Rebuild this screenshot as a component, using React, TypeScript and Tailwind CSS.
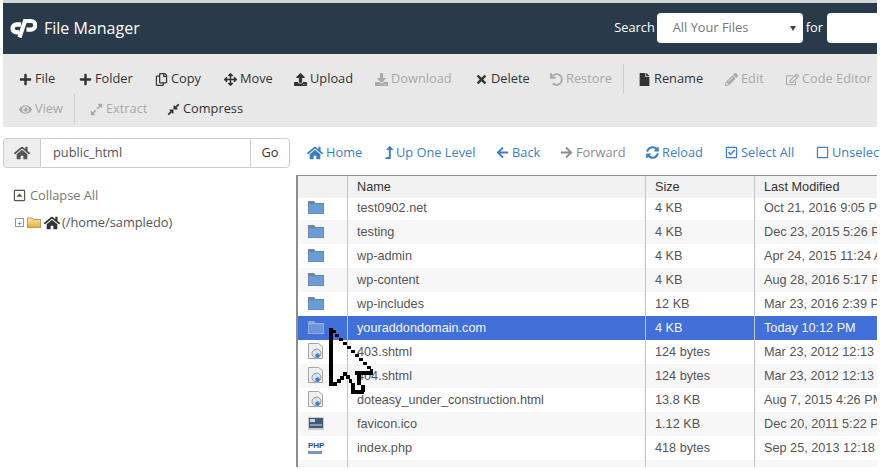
import React from "react";
import { FaPlus, FaRegCopy, FaArrowsAlt, FaUpload, FaDownload, FaTimes, FaUndo, FaFile, FaPencilAlt, FaRegEdit, FaEye, FaExpandAlt, FaCompressAlt, FaHome, FaLevelUpAlt, FaArrowLeft, FaArrowRight, FaSyncAlt, FaRegCheckSquare, FaRegSquare, FaRegCaretSquareUp } from "react-icons/fa";

const dark = "text-[#333]";
const dim = "text-[#a9a9a9]";

function Tool({ icon: I, label, off, size = 13, className = "" }: { icon: any; label: string; off?: boolean; size?: number; className?: string }) {
  return (
    <div className={`flex items-center gap-[3px] ${off ? dim : dark} ${className}`}>
      <I size={size} />
      <span>{label}</span>
    </div>
  );
}

function Nav({ icon: I, label, off, size = 13, iconClass = "", className = "" }: { icon: any; label: string; off?: boolean; size?: number; iconClass?: string; className?: string }) {
  return (
    <div className={`flex shrink-0 items-center gap-[3px] ${off ? "text-[#8c8c8c]" : "text-[#3b7fc4]"} ${className}`}>
      <I size={size} className={iconClass} />
      <span>{label}</span>
    </div>
  );
}

function BlueFolder({ pale }: { pale?: boolean }) {
  return (
    <svg width="16" height="14" viewBox="0 0 16 14">
      <path d="M0 1h6l1.500 2H16v11H0z" fill={pale ? "#8aa6dc" : "#7d8085"} />
      <path d="M.3 3.800h15.400v9.900H.3z" fill={pale ? "#6c93dc" : "#6d9bd6"} stroke={pale ? "#b3c6ec" : "#5b88c4"} strokeWidth="0.6" />
    </svg>
  );
}

function WebFile() {
  return (
    <svg width="15" height="16" viewBox="0 0 15 16">
      <path d="M.5.500h10l4 3v12H.5z" fill="#f0f0f0" stroke="#a5a5a5" />
      <circle cx="8.500" cy="10.500" r="4.500" fill="#dde3ea" stroke="#8b98a8" />
      <circle cx="9.500" cy="12.500" r="2.200" fill="#3f7fca" />
    </svg>
  );
}

function IcoFile() {
  return (
    <svg width="16" height="13" viewBox="0 0 16 13">
      <rect width="16" height="13" fill="#c9ccd0" />
      <rect x="1" y="1" width="14" height="10" fill="#43597a" />
      <rect x="2" y="2" width="5" height="3" fill="#bcd4ee" />
      <rect x="2" y="7" width="12" height="2" fill="#8a9bb0" />
    </svg>
  );
}

function TxtFile() {
  return (
    <svg width="15" height="12" viewBox="0 0 15 12">
      <path d="M2 2.500h12l-2 5H.5z" fill="#fbeeea" stroke="#c98a80" />
    </svg>
  );
}

function PhpFile() {
  return (
    <div className="w-[14px] border-b-[3px] border-[#7c93c9] text-center font-['Liberation_Sans',sans-serif] text-[8px] leading-[10px] font-bold text-[#2d4a9b]">PHP</div>
  );
}

const rows: { icon: string; name: string; size: string; date: string; sel?: boolean }[] = [
  { icon: "folder", name: "test0902.net", size: "4 KB", date: "Oct 21, 2016 9:05 PM" },
  { icon: "folder", name: "testing", size: "4 KB", date: "Dec 23, 2015 5:26 PM" },
  { icon: "folder", name: "wp-admin", size: "4 KB", date: "Apr 24, 2015 11:24 AM" },
  { icon: "folder", name: "wp-content", size: "4 KB", date: "Aug 28, 2016 5:17 PM" },
  { icon: "folder", name: "wp-includes", size: "12 KB", date: "Mar 23, 2016 2:39 PM" },
  { icon: "folder", name: "youraddondomain.com", size: "4 KB", date: "Today 10:12 PM", sel: true },
  { icon: "web", name: "403.shtml", size: "124 bytes", date: "Mar 23, 2012 12:13 PM" },
  { icon: "web", name: "404.shtml", size: "124 bytes", date: "Mar 23, 2012 12:13 PM" },
  { icon: "web", name: "doteasy_under_construction.html", size: "13.8 KB", date: "Aug 7, 2015 4:26 PM" },
  { icon: "ico", name: "favicon.ico", size: "1.12 KB", date: "Dec 20, 2011 5:22 PM" },
  { icon: "php", name: "index.php", size: "418 bytes", date: "Sep 25, 2013 12:18 PM" },
  { icon: "txt", name: "license.txt", size: "19.46 KB", date: "Mar 23, 2016 2:39 PM" },
];

function Row({ r, i }: { r: (typeof rows)[number]; i: number }) {
  const bg = r.sel ? "bg-[#4170d8] text-[#f4f7fd]" : i % 2 === 0 ? "bg-white text-[#555]" : "bg-[#f7f7f7] text-[#555]";
  return (
    <div className={`flex h-[24px] shrink-0 items-center ${bg} ${i === 0 ? "-mt-[2px]" : ""}`}>
      <div className="flex w-[49px] shrink-0 items-center pb-[2px] pl-[10px]">
        {r.icon === "folder" && <BlueFolder pale={r.sel} />}
        {r.icon === "web" && <WebFile />}
        {r.icon === "ico" && <IcoFile />}
        {r.icon === "php" && <PhpFile />}
        {r.icon === "txt" && <TxtFile />}
      </div>
      <div className={`h-full w-[298px] shrink-0 border-l border-[#c4c4c4] pl-[9px] leading-[24px] ${r.sel ? "font-medium" : ""}`}>{r.name}</div>
      <div className="h-full w-[109px] shrink-0 border-l border-[#c4c4c4] pl-[9px] leading-[24px]">{r.size}</div>
      <div className="h-full flex-1 overflow-hidden border-l border-[#c4c4c4] pl-[9px] leading-[24px] whitespace-nowrap">{r.date}</div>
    </div>
  );
}

function Cursor() {
  return (
    <svg className="absolute top-[327px] left-[329px]" width="46" height="68" viewBox="0 0 46 68" shapeRendering="crispEdges">
      <path d="M0 1h4v58H0zM0 55h8v4H0zM8 52h4v4H8zM11 49h4v4h-4zM14 45h4v4h-4zM17 48h4v4h-4zM20 52h3v4h-3zM22 56h4v8h-4zM22 63h13v4H22zM32 58h4v7h-4zM28 48h4v10h-4zM26 44h18v4H26z" fill="#000" />
      <path d="M3 3h4v3H3zM6 7h4v3H6zM10 11h4v3h-4zM14 15h4v3h-4zM18 19h4v3h-4zM22 23h4v3h-4zM26 27h4v3h-4zM30 31h4v3h-4zM34 35h4v3h-4zM38 39h4v3h-4zM41 42h3v3h-3z" fill="#000" />
    </svg>
  );
}

export default function App() {
  return (
    <div className="relative h-[471px] w-[880px] overflow-hidden bg-white font-['Open_Sans',sans-serif] text-[12.8px]">
      <div className="mr-[3px] ml-[3px] flex h-[466px] flex-col border-t-[3px] border-[#d4d6d8]">
        <header className="flex h-[51px] shrink-0 items-center bg-[#293a4a] pb-[1px] pl-[6px] text-white">
          <svg width="28" height="20" viewBox="0 0 28 20" className="mr-[7px]">
            <path d="M12 6.500H7.500a3.900 3.900 0 0 0 0 7.800H10" fill="none" stroke="#fff" strokeWidth="4.400" />
            <path d="M10.500 19.500L16 3h6a4.300 4.300 0 0 1 0 8.600h-4.500" fill="none" stroke="#fff" strokeWidth="4.200" />
          </svg>
          <span className="text-[16px] font-medium">File Manager</span>
          <div className="ml-auto flex items-center">
            <span className="mr-[2px]">Search</span>
            <div className="relative flex h-[30px] w-[146px] items-center rounded-[4px] bg-white pl-[16px] text-[#777]">
              All Your Files
              <span className="absolute top-[13px] right-[7px] h-0 w-0 border-x-[3px] border-t-[5px] border-x-transparent border-t-[#444]" />
            </div>
            <span className="mr-[4px] ml-[3px]">for</span>
            <div className="h-[30px] w-[50px] rounded-l-[4px] bg-white" />
          </div>
        </header>
        <div className="h-[73px] shrink-0 bg-[#e8e8e8] pt-[10px] pl-[16px]">
          <div className="flex h-[30px] items-center whitespace-nowrap">
            <Tool icon={FaPlus} label="File" className="w-[60px]" />
            <Tool icon={FaPlus} label="Folder" className="w-[76px]" />
            <Tool icon={FaRegCopy} label="Copy" className="w-[69px]" />
            <Tool icon={FaArrowsAlt} label="Move" className="w-[70px]" />
            <Tool icon={FaUpload} label="Upload" className="w-[81px]" />
            <Tool icon={FaDownload} label="Download" off className="w-[100px]" />
            <Tool icon={FaTimes} label="Delete" className="w-[75px]" />
            <Tool icon={FaUndo} label="Restore" off className="w-[73px]" />
            <div className="mr-[14px] h-[30px] w-px bg-[#cfcfcf]" />
            <Tool icon={FaFile} label="Rename" className="w-[87px]" />
            <Tool icon={FaPencilAlt} label="Edit" off className="w-[61px]" />
            <Tool icon={FaRegEdit} label="Code Editor" off />
          </div>
          <div className="flex h-[30px] items-center whitespace-nowrap">
            <Tool icon={FaEye} label="View" off className="w-[55px]" />
            <div className="mr-[15px] h-[30px] w-px bg-[#cfcfcf]" />
            <Tool icon={FaExpandAlt} label="Extract" off className="w-[77px]" />
            <Tool icon={FaCompressAlt} label="Compress" />
          </div>
        </div>
        <div className="flex min-h-0 flex-1">
          <aside className="w-[293px] shrink-0 pt-[11px]">
            <div className="flex h-[30px] w-[287px]">
              <div className="flex w-[38px] items-center justify-center rounded-l-[4px] border border-[#ccc] bg-[#eee] text-[#555]">
                <FaHome size={16} />
              </div>
              <div className="flex flex-1 items-center border-y border-[#ccc] pl-[12px] text-[#555]">public_html</div>
              <div className="flex w-[40px] items-center justify-center rounded-r-[4px] border border-[#ccc] text-[#333]">Go</div>
            </div>
            <div className="mt-[18px] ml-[10px] flex items-center gap-[4px] text-[#777]">
              <FaRegCaretSquareUp size={13} className="text-[#555]" />
              Collapse All
            </div>
            <div className="mt-[8px] ml-[12px] flex items-center text-[#555]">
              <span className="mr-[3px] flex h-[9px] w-[9px] items-center justify-center border border-[#999] text-[8px] leading-none">+</span>
              <svg width="14" height="11" viewBox="0 0 14 11" className="mr-[3px]">
                <defs>
                  <linearGradient id="fg" x1="0" y1="0" x2="0" y2="1">
                    <stop offset="0" stopColor="#fbe9a6" />
                    <stop offset="1" stopColor="#dfae3a" />
                  </linearGradient>
                </defs>
                <path d="M.4 1h5l1 1.500h7.200v8.100H.4z" fill="url(#fg)" stroke="#8d7a45" strokeWidth="0.7" />
              </svg>
              <FaHome size={16} className="mr-[2px] text-[#333]" />
              (/home/sampledo)
            </div>
          </aside>
          <main className="min-w-0 flex-1">
            <div className="flex h-[48px] items-center whitespace-nowrap pt-[3px] pl-[11px]">
              <Nav icon={FaHome} label="Home" size={16} className="w-[78px]" />
              <Nav icon={FaLevelUpAlt} label="Up One Level" iconClass="w-[8px]" className="w-[111px]" />
              <Nav icon={FaArrowLeft} label="Back" className="w-[64px]" />
              <Nav icon={FaArrowRight} label="Forward" off className="w-[86px]" />
              <Nav icon={FaSyncAlt} label="Reload" className="w-[79px]" />
              <Nav icon={FaRegCheckSquare} label="Select All" className="w-[91px]" />
              <Nav icon={FaRegSquare} label="Unselect All" />
            </div>
            <div className="flex h-[292px] flex-col overflow-hidden border-t border-l-2 border-[#8d8d8d] font-['Liberation_Sans',sans-serif] text-[12.7px]">
              <div className="relative z-10 flex h-[22px] shrink-0 items-center bg-[#f2f2f2] text-[#333]">
                <div className="w-[49px] shrink-0" />
                <div className="h-full w-[298px] shrink-0 border-l border-[#c4c4c4] pl-[9px] leading-[22px]">Name</div>
                <div className="h-full w-[109px] shrink-0 border-l border-[#c4c4c4] pl-[9px] leading-[22px]">Size</div>
                <div className="h-full flex-1 border-l border-[#c4c4c4] pl-[9px] leading-[22px]">Last Modified</div>
              </div>
              {rows.map((r, i) => (
                <Row key={r.name} r={r} i={i} />
              ))}
            </div>
          </main>
        </div>
      </div>
      <Cursor />
    </div>
  );
}
